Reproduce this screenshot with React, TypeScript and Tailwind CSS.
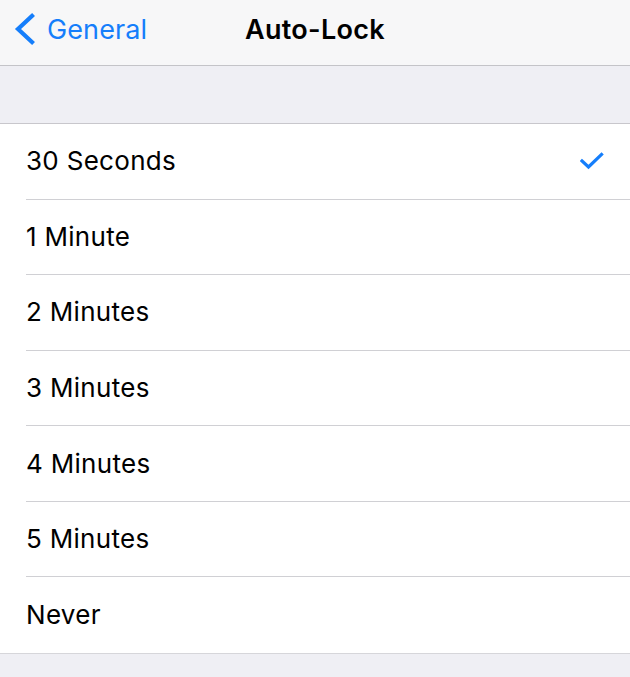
import React from "react";

const items = ["30 Seconds", "1 Minute", "2 Minutes", "3 Minutes", "4 Minutes", "5 Minutes", "Never"];

export default function App() {
  return (
    <div className="w-[630px] h-[677px] bg-[#efeff4] overflow-hidden" style={{ fontFamily: "Inter, 'Liberation Sans', sans-serif" }}>
      <div className="relative h-[66px] bg-[#f7f7f8] border-b border-[#c4c4c8] flex items-center justify-center pb-[7px]">
        <div className="absolute left-[12px] top-0 h-[58px] flex items-center gap-[9px] text-[#157efb]">
          <svg width="26" height="32" viewBox="0 0 26 32">
            <path d="M20 3 L6 16 L20 29" fill="none" stroke="#157efb" strokeWidth="4.2" strokeLinecap="square" strokeLinejoin="miter" />
          </svg>
          <span className="text-[27px] tracking-[0.1px] leading-none">General</span>
        </div>
        <span className="text-[27px] font-semibold text-black tracking-[0.3px] leading-none">Auto-Lock</span>
      </div>
      <div className="h-[58px] border-b border-[#c8c7cc]" />
      <div className="bg-white border-b border-[#d6d6da]">
        {items.map((label, i) => (
          <div key={label} className="pl-[26px] h-[75.57px]">
            <div className={`h-full flex items-center pr-[26px] ${i < items.length - 1 ? "border-b border-[#d0d0d4]" : ""}`}>
              <span className="flex-1 text-[26px] text-black tracking-[0.3px] leading-none">{label}</span>
              {i === 0 && (
                <svg width="24" height="18" viewBox="0 0 24 18">
                  <path d="M2 9 L8.5 15 L21.5 2.5" fill="none" stroke="#157efb" strokeWidth="3.2" strokeLinecap="square" />
                </svg>
              )}
            </div>
          </div>
        ))}
      </div>
    </div>
  );
}
